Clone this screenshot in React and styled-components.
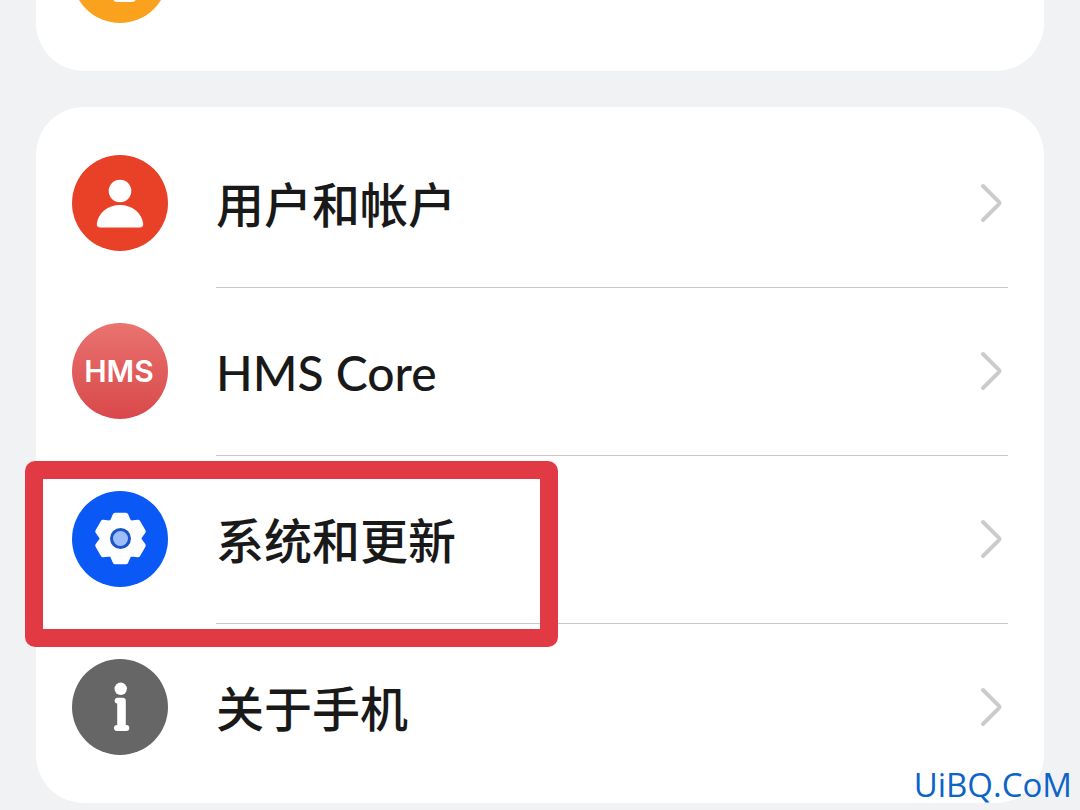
import styled, { createGlobalStyle } from 'styled-components';

const GEAR_POINTS = [0, 60, 120, 180, 240, 300]
  .flatMap((angle) => [
    [angle - 13, 23.8],
    [angle + 13, 23.8],
    [angle + 24, 19.2],
    [angle + 30, 18.4],
    [angle + 36, 19.2],
  ])
  .map(([angle, radius]) => {
    const rad = (angle * Math.PI) / 180;
    return `${(48.5 + radius * Math.sin(rad)).toFixed(2)},${(47.5 - radius * Math.cos(rad)).toFixed(2)}`;
  })
  .join(' ');

export default function App() {
  return (
    <>
      <GlobalStyle />
      <Page>
        <PreviousCard>
          <PreviousRow>
            <Icon $bg="#faa21e">
              <rect x="41" y="56" width="23" height="19" rx="4" fill="#fff" />
            </Icon>
          </PreviousRow>
        </PreviousCard>
        <Card>
          <Row>
            <RowLink href="#account">
              <Icon $bg="#e84127">
                <circle cx="48" cy="36" r="11.3" fill="#fff" />
                <path
                  d="M28.5 72.5q-4 0-3.7-3.8C26.2 58 36 50 48 50s21.8 8 23.2 18.7q.3 3.8-3.7 3.8z"
                  fill="#fff"
                />
              </Icon>
              <RowBody>
                <Label>用户和帐户</Label>
                <Chevron />
              </RowBody>
            </RowLink>
          </Row>
          <Row>
            <RowLink href="#hms">
              <Icon $bg="linear-gradient(#e9736f, #d9484b)">
                <HmsText x="47" y="59">
                  HMS
                </HmsText>
              </Icon>
              <RowBody $divided>
                <Label>HMS Core</Label>
                <Chevron />
              </RowBody>
            </RowLink>
          </Row>
          <Row>
            <RowLink href="#system">
              <Icon $bg="#0a59f7">
                <polygon
                  points={GEAR_POINTS}
                  fill="#fff"
                  stroke="#fff"
                  strokeWidth="5"
                  strokeLinejoin="round"
                />
                <circle cx="48.5" cy="47.5" r="9" fill="#9dbdfc" stroke="#1c55c8" strokeWidth="3" />
              </Icon>
              <RowBody $divided>
                <Label>系统和更新</Label>
                <Chevron />
              </RowBody>
            </RowLink>
            <Highlight />
          </Row>
          <Row>
            <RowLink href="#about">
              <Icon $bg="#666">
                <circle cx="48.7" cy="29.8" r="6.2" fill="#fff" />
                <path
                  d="M45 38.700h5.500q3.300 0 3.300 3.300v24h.5a3 3 0 0 1 0 6H45a3 3 0 0 1 0-6h.2V44.600H45a3 3 0 0 1 0-5.900z"
                  fill="#fff"
                />
              </Icon>
              <RowBody $divided>
                <Label>关于手机</Label>
                <Chevron />
              </RowBody>
            </RowLink>
          </Row>
        </Card>
        <Watermark>UiBQ.CoM</Watermark>
      </Page>
    </>
  );
}

function Icon({ $bg, children }) {
  return (
    <IconCircle $bg={$bg}>
      <svg viewBox="0 0 96 96" width="96" height="96" aria-hidden="true">
        {children}
      </svg>
    </IconCircle>
  );
}

function Chevron() {
  return (
    <ChevronSvg viewBox="0 0 28 40" aria-hidden="true">
      <path d="M3 3L18.700 18.700q1.300 1.300 0 2.600L3 37" />
    </ChevronSvg>
  );
}

const GlobalStyle = createGlobalStyle`
  * {
    box-sizing: border-box;
  }
  body {
    margin: 0;
    background: #f1f2f4;
    font-family: Lato, 'Noto Sans CJK SC', sans-serif;
    color: #191919;
  }
`;

const Page = styled.main`
  position: relative;
  min-height: 100vh;
  padding: 0 36px;
  overflow: hidden;
  display: flex;
  flex-direction: column;
  gap: 36px;
`;

const Card = styled.ul`
  margin: 0;
  padding: 12px 0;
  list-style: none;
  background: #fff;
  border-radius: 48px;
`;

const PreviousCard = styled.section`
  margin-top: -121px;
  padding: 12px 0;
  background: #fff;
  border-radius: 48px;
`;

const PreviousRow = styled.div`
  height: 168px;
  padding: 0 36px;
  display: flex;
  align-items: center;
`;

const Row = styled.li`
  position: relative;
`;

const RowLink = styled.a`
  height: 168px;
  padding: 0 36px;
  display: flex;
  align-items: center;
  gap: 48px;
  color: inherit;
  text-decoration: none;
`;

const RowBody = styled.div`
  flex: 1;
  height: 100%;
  display: flex;
  align-items: center;
  justify-content: space-between;
  box-shadow: ${({ $divided }) => ($divided ? 'inset 0 1px #c9c9c9' : 'none')};
`;

const Label = styled.span`
  padding-top: 4px;
  font-size: 48px;
  line-height: 64px;
  font-weight: 500;
`;

const IconCircle = styled.div`
  width: 96px;
  height: 96px;
  flex-shrink: 0;
  border-radius: 50%;
  background: ${({ $bg }) => $bg};

  svg {
    display: block;
  }
`;

const HmsText = styled.text`
  fill: #fff;
  font-family: Inter, sans-serif;
  font-size: 30px;
  font-weight: 600;
  text-anchor: middle;
`;

const ChevronSvg = styled.svg`
  width: 28px;
  height: 40px;
  fill: none;
  stroke: #cbcbcb;
  stroke-width: 4;
  stroke-linecap: round;
`;

const Highlight = styled.div`
  position: absolute;
  top: 6px;
  left: -11px;
  width: 533px;
  height: 186px;
  border: 18px solid #e23a45;
  border-radius: 10px;
  z-index: 1;
  pointer-events: none;
`;

const Watermark = styled.div`
  position: absolute;
  right: 8px;
  bottom: 4px;
  color: #0d64c8;
  font-family: 'Open Sans', sans-serif;
  font-size: 33px;
  font-weight: 500;
  line-height: 42px;
`;
